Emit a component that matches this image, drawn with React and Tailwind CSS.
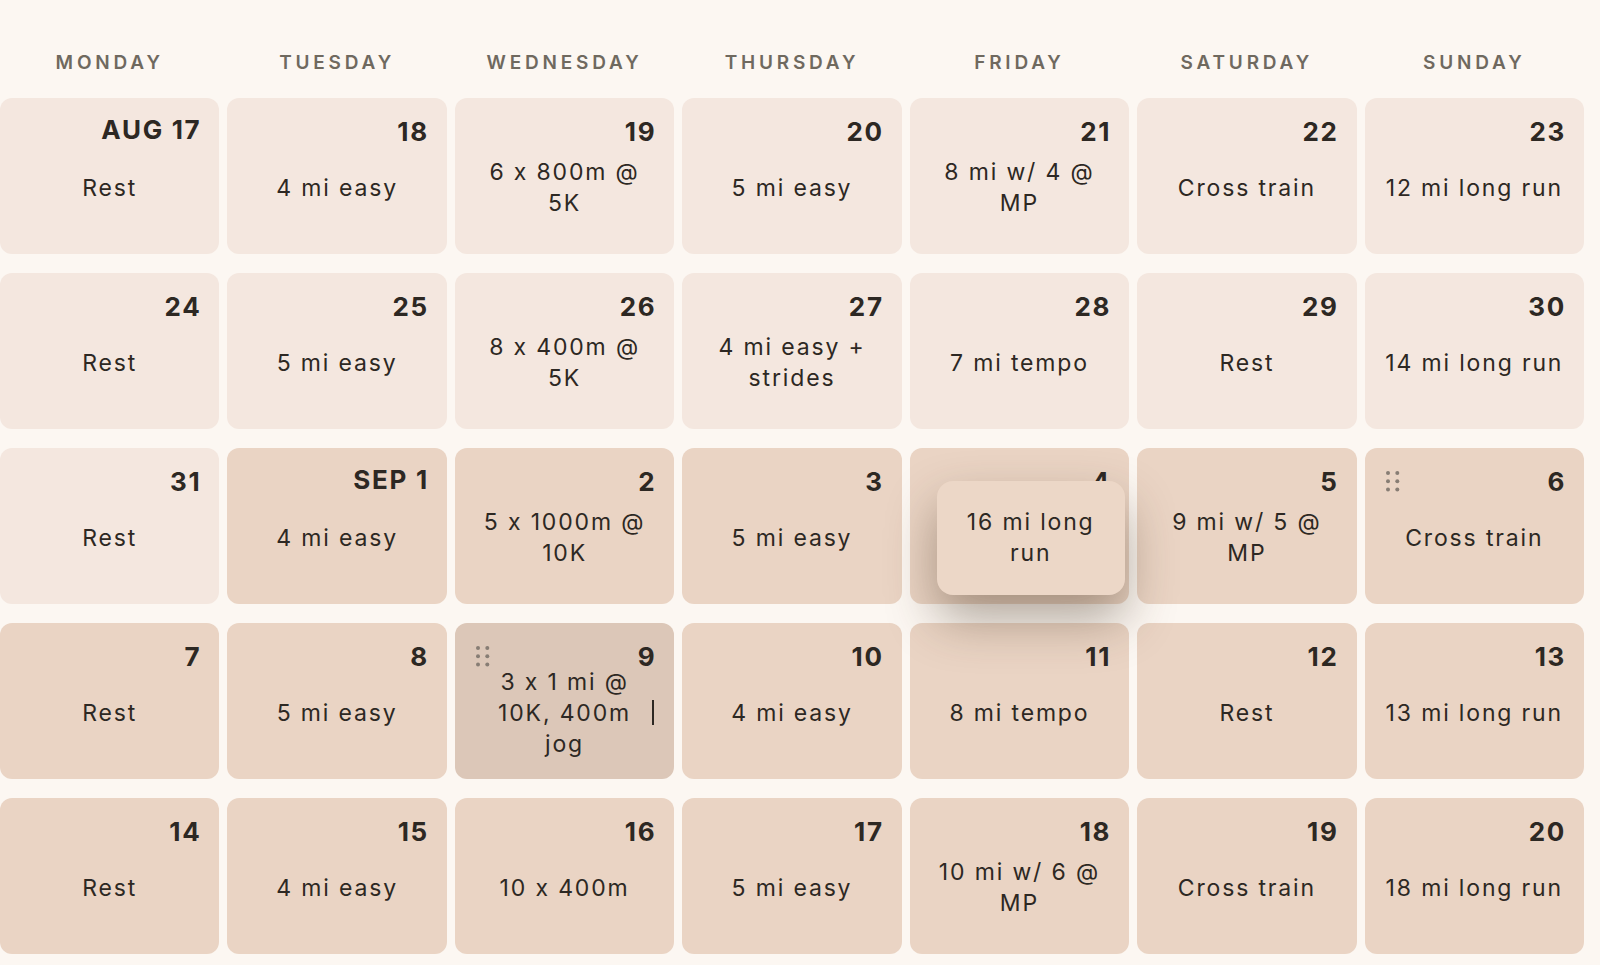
import React from "react";

const days = ["MONDAY", "TUESDAY", "WEDNESDAY", "THURSDAY", "FRIDAY", "SATURDAY", "SUNDAY"];

const weeks = [
  [
    { d: "AUG 17", t: ["Rest"], l: true },
    { d: "18", t: ["4 mi easy"], l: true },
    { d: "19", t: ["6 x 800m @", "5K"], l: true },
    { d: "20", t: ["5 mi easy"], l: true },
    { d: "21", t: ["8 mi w/ 4 @", "MP"], l: true },
    { d: "22", t: ["Cross train"], l: true },
    { d: "23", t: ["12 mi long run"], l: true },
  ],
  [
    { d: "24", t: ["Rest"], l: true },
    { d: "25", t: ["5 mi easy"], l: true },
    { d: "26", t: ["8 x 400m @", "5K"], l: true },
    { d: "27", t: ["4 mi easy +", "strides"], l: true },
    { d: "28", t: ["7 mi tempo"], l: true },
    { d: "29", t: ["Rest"], l: true },
    { d: "30", t: ["14 mi long run"], l: true },
  ],
  [
    { d: "31", t: ["Rest"], l: true },
    { d: "SEP 1", t: ["4 mi easy"] },
    { d: "2", t: ["5 x 1000m @", "10K"] },
    { d: "3", t: ["5 mi easy"] },
    { d: "4", t: [], drag: true },
    { d: "5", t: ["9 mi w/ 5 @", "MP"] },
    { d: "6", t: ["Cross train"], handle: true },
  ],
  [
    { d: "7", t: ["Rest"] },
    { d: "8", t: ["5 mi easy"] },
    { d: "9", t: ["3 x 1 mi @", "10K, 400m", "jog"], sel: true, handle: true },
    { d: "10", t: ["4 mi easy"] },
    { d: "11", t: ["8 mi tempo"] },
    { d: "12", t: ["Rest"] },
    { d: "13", t: ["13 mi long run"] },
  ],
  [
    { d: "14", t: ["Rest"] },
    { d: "15", t: ["4 mi easy"] },
    { d: "16", t: ["10 x 400m"] },
    { d: "17", t: ["5 mi easy"] },
    { d: "18", t: ["10 mi w/ 6 @", "MP"] },
    { d: "19", t: ["Cross train"] },
    { d: "20", t: ["18 mi long run"] },
  ],
];

function Grip() {
  return (
    <svg width="14" height="21" viewBox="0 0 14 21" className="absolute left-[21px] top-[23px]">
      {[2, 10.3, 18.6].map((cy) => (
        <g key={cy}>
          <circle cx="2" cy={cy} r="2" fill="#877d74" />
          <circle cx="11.3" cy={cy} r="2" fill="#877d74" />
        </g>
      ))}
    </svg>
  );
}

function Cell({ c }) {
  const bg = c.sel ? "bg-[#dcc7b8]" : c.l ? "bg-[#f4e7df]" : "bg-[#ead4c4]";
  const month = c.d.length > 2;
  return (
    <div className={`relative flex h-[156px] flex-col rounded-xl pl-5 pr-[20px] pt-4 pb-7 ${bg} ${c.drag ? "z-10" : ""}`}>
      {c.handle && <Grip />}
      <div
        className={`-mr-[2px] text-right text-[26px] font-bold leading-[36px] tracking-[0.065em] text-[#2d2823] ${month ? "-mt-[2px] mb-[2px]" : ""}`}
      >
        {c.d}
      </div>
      <div className="flex min-h-0 flex-1 flex-col items-center justify-center text-center text-[23px] leading-[31px] tracking-[0.08em] text-[#2d2823]">
        {c.t.map((line) => (
          <div key={line} className="whitespace-nowrap">{line}</div>
        ))}
      </div>
      {c.sel && <div className="absolute left-[197px] top-[77px] h-[25px] w-[2px] bg-[#2d2823]" />}
      {c.drag && (
        <div className="absolute left-[27px] top-[33px] flex h-[114px] w-[188px] flex-col items-center justify-center rounded-2xl bg-[#ecd7c7] text-center text-[23px] leading-[31px] tracking-[0.08em] text-[#2d2823] shadow-[0_24px_50px_rgba(70,50,30,0.42)]">
          <div>16 mi long</div>
          <div>run</div>
        </div>
      )}
    </div>
  );
}

export default function App() {
  return (
    <div
      className="min-h-screen bg-[#fcf7f2] pt-[48px] pb-[11px] [font-feature-settings:'calt'_0]"
      style={{ fontFamily: "Inter, 'Noto Sans', sans-serif" }}
    >
      <div className="w-[1584px]">
        <div className="mb-[20px] grid grid-cols-7 gap-x-2">
          {days.map((d) => (
            <div key={d} className="text-center text-[19px] font-semibold leading-[30px] tracking-[0.2em] text-[#6f695f]">
              {d}
            </div>
          ))}
        </div>
        <div className="grid grid-cols-7 gap-x-2 gap-y-[19px]">
          {weeks.flat().map((c, i) => (
            <Cell key={i} c={c} />
          ))}
        </div>
      </div>
    </div>
  );
}
